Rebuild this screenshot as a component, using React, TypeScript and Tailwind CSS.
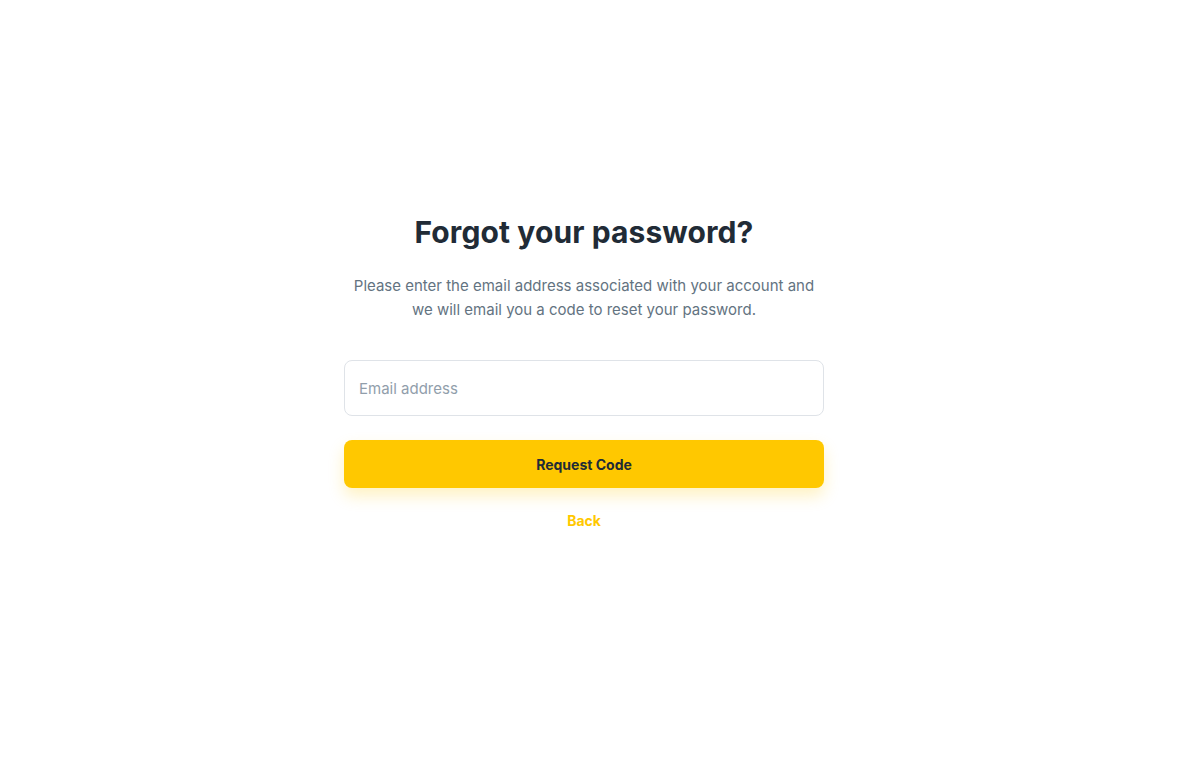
import React from "react";

export default function App() {
  return (
    <div className="min-h-screen w-full bg-white flex justify-center pr-[21px] font-['Inter','Noto_Sans',sans-serif]">
      <div className="w-[480px] pt-[210px] flex flex-col items-center">
        <h1 className="text-[30px] leading-[44px] font-bold text-[#212b36] tracking-[0.1px]">
          Forgot your password?
        </h1>
        <p className="mt-[20px] text-[15px] leading-[24px] text-[#637381] text-center">
          Please enter the email address associated with your account and
          <br />
          we will email you a code to reset your password.
        </p>
        <input
          type="email"
          placeholder="Email address"
          className="mt-[38px] w-full h-[56px] rounded-lg border border-[#dfe3e8] px-[14px] text-[15px] text-[#212b36] placeholder:text-[#919eab] outline-none"
        />
        <button className="mt-[24px] w-full h-[48px] rounded-lg bg-[#ffc800] text-[14px] font-bold text-[#212b36] shadow-[0_8px_16px_0_rgba(255,200,0,0.24)]">
          Request Code
        </button>
        <button className="mt-[20px] h-[24px] text-[14px] font-bold text-[#ffc800]">
          Back
        </button>
      </div>
    </div>
  );
}
